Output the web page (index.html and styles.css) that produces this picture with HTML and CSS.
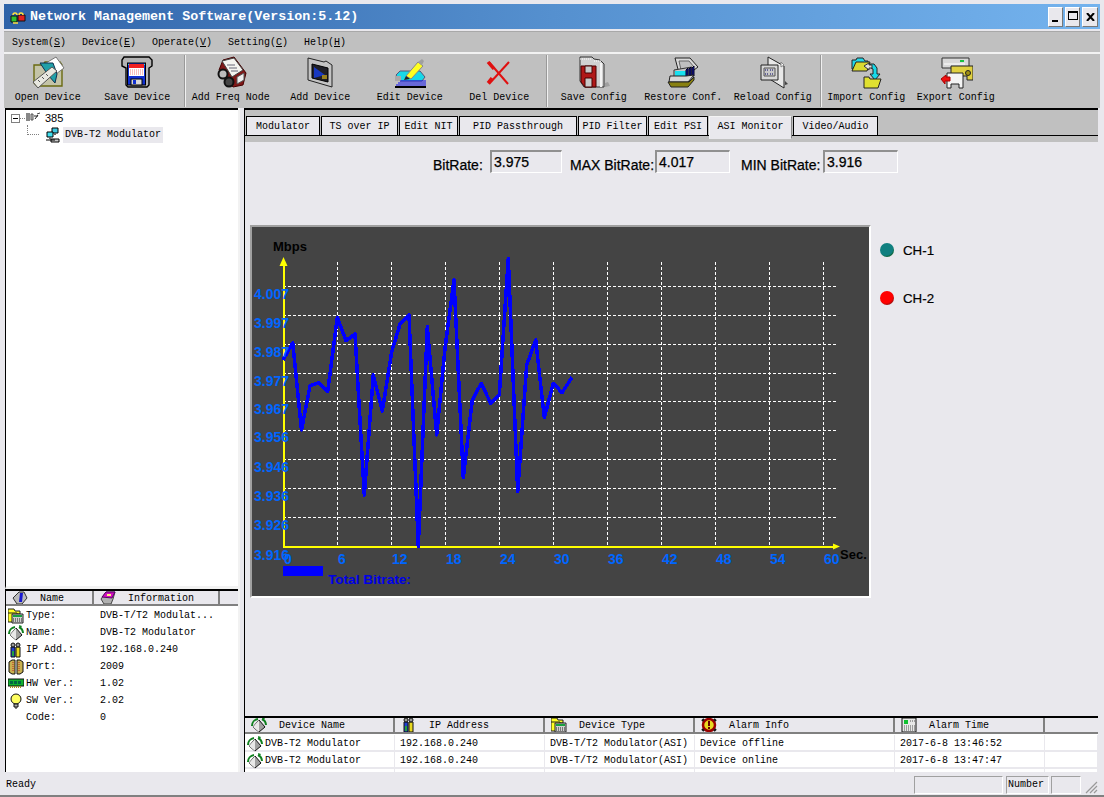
FILE: index.html
```html
<!DOCTYPE html>
<html lang="en">
<head>
<meta charset="utf-8">
<title>Network Management Software</title>
<link rel="stylesheet" href="styles.css">
</head>
<body>
<svg class="defs" xmlns="http://www.w3.org/2000/svg">
  <symbol id="i-open" viewBox="0 0 34 34">
    <path d="M3 10h9l2-3h15l2 3v21H6l-3-3z" fill="#c4c4a8" stroke="#6a6a10" stroke-width="1.4"/>
    <path d="M15 8l10-6 8 11-8 6z" fill="#fff" stroke="#777"/>
    <path d="M9 8h13l4 11-2 9-7-8z" fill="#20a0a8" stroke="#103050"/>
    <path d="M2 27L21 12l5 4L7 33z" fill="#e8e8e0" stroke="#555"/>
    <path d="M7 25l2 2M11 22l2 2M15 19l2 2" stroke="#555"/>
  </symbol>
  <symbol id="i-save" viewBox="0 0 34 34">
    <path d="M4 2h25l3 3v6l-3 2v17l-2 2H8l-2-2V13L2 11V5z" fill="#b4b4b4" stroke="#000" stroke-width="1.4"/>
    <rect x="7.500" y="8" width="18" height="22" fill="#1030d0" stroke="#000"/>
    <path d="M8 9h1v1H8zM24 9h1v1h-1z" fill="#20e0e0"/>
    <rect x="9" y="9" width="15" height="4" fill="#f02020"/>
    <rect x="9" y="13" width="15" height="8" fill="#fff"/>
    <path d="M10 15h13M10 17h13M10 19h13" stroke="#f08080" stroke-dasharray="1 1"/>
    <rect x="11" y="24" width="11" height="6" fill="#d8d8d8" stroke="#000"/>
    <rect x="13" y="25" width="3" height="4" fill="#1030d0"/>
  </symbol>
  <symbol id="i-freq" viewBox="0 0 34 34">
    <path d="M9 5L20 2l12 16-3 12-10 2L5 15z" fill="#801818" stroke="#400"/>
    <path d="M8 6l12-3 9 12-11 7z" fill="#f4f4f0" stroke="#444"/>
    <path d="M13 10h8M15 13h8M17 16h7" stroke="#667"/>
    <path d="M23 22l7-4v7l-7 4z" fill="#eee" stroke="#555"/>
    <circle cx="9" cy="19" r="4.500" fill="#bbb" stroke="#111" stroke-width="2"/>
    <circle cx="15" cy="27" r="4.500" fill="#444" stroke="#111" stroke-width="2"/>
  </symbol>
  <symbol id="i-dev" viewBox="0 0 34 34">
    <path d="M5 3l16 4 2-1 6 4v22L5 25z" fill="#c4c4c4" stroke="#222"/>
    <path d="M9 9l16 4v14L9 23z" fill="#202028" stroke="#000"/>
    <path d="M11 12l11 8-11 3z" fill="#1838c0"/>
    <path d="M19 20h5v4h-5z" fill="#988020"/>
  </symbol>
  <symbol id="i-edit" viewBox="0 0 34 34">
    <path d="M3 20L7 16h20l5 6-3 4H7z" fill="#18d8e8" stroke="#557"/>
    <path d="M2 21h6v5H2z" fill="#a8a8a8"/>
    <path d="M7 26h26M5 28h28M3 30h30" stroke="#1010f0"/>
    <path d="M2 32h31" stroke="#000" stroke-width="2"/>
    <path d="M13 21L25 7l5 4-12 13z" fill="#ffff20" stroke="#888"/>
    <path d="M25 7l4-3 2 2-2 4z" fill="#a0a0a0"/>
    <path d="M13 21l4 3-6 1z" fill="#222"/>
  </symbol>
  <symbol id="i-del" viewBox="0 0 34 34">
    <path d="M7 7l19 22" stroke="#e01010" stroke-width="2"/>
    <path d="M27 7L7 29" stroke="#e01010" stroke-width="2"/>
    <path d="M6 7l6 7M6 28l4-5" stroke="#e01010" stroke-width="3.400"/>
  </symbol>
  <symbol id="i-savec" viewBox="0 0 34 34">
    <path d="M3 2h12l2 2 6 1 4 4v23H7l-4-6z" fill="#d0d0d0" stroke="#333"/>
    <path d="M3 4h11M17 6h8" stroke="#fff" stroke-dasharray="1 1"/>
    <path d="M24 8v24" stroke="#f4f4f4" stroke-width="2"/>
    <path d="M4 11h15v21H8l-4-5z" fill="#b01818" stroke="#400"/>
    <path d="M8 11h7v7H8z" fill="#c8c8c8" stroke="#400"/>
    <path d="M8 23h7v9H8z" fill="#c8c8c8" stroke="#400"/>
    <path d="M28 32l5-1-2-4-3 1z" fill="#a0a0a0"/>
  </symbol>
  <symbol id="i-restore" viewBox="0 0 34 34">
    <path d="M9 3h15l8 9-8 6H13z" fill="#d8d8d8" stroke="#222"/>
    <path d="M13 6h10l5 6-5 3H15z" fill="#c0c0c0" stroke="#666"/>
    <path d="M8 15l18-3v10L8 25z" fill="#c8c8c8" stroke="#333"/>
    <path d="M9 16h12v6H9z" fill="#18e0f0"/>
    <path d="M20 15l2-2v10h-2zM23 14l2-2v10h-2zM26 13l2-2v10h-2z" fill="#1818a0" stroke="#002"/>
    <path d="M4 21h16l8-1-6 7H3z" fill="#d8d8d8" stroke="#222"/>
    <path d="M2 27h21l5-5v3l-6 7H5z" fill="#888010" stroke="#222"/>
  </symbol>
  <symbol id="i-reload" viewBox="0 0 34 34">
    <path d="M12 2l16 9v22L12 23z" fill="#e8e8e8" stroke="#222"/>
    <path d="M5 10h17v15H5z" fill="#d8d8d8" stroke="#222"/>
    <path d="M8 13h11v8H8z" fill="#c8c8c8" stroke="#555"/>
    <path d="M9 15h3M14 15h3M9 19h3M14 19h3" stroke="#006" stroke-dasharray="1 1"/>
    <path d="M28 10l-3-3v5z" fill="#fff" stroke="#888"/>
    <path d="M29 30l3-1-3-3z" fill="#444"/>
  </symbol>
  <symbol id="i-import" viewBox="0 0 34 34">
    <path d="M3 5h4l1-2h6l2 3h3v8H3z" fill="#20d8e8" stroke="#222"/>
    <path d="M3 16l4-9h14l-3 9z" fill="#d8d830" stroke="#222"/>
    <path d="M21 9h4l3 4v6h3l-5 6-5-6h3v-5l-2-1z" fill="#18d8e8" stroke="#222"/>
    <path d="M15 11l5-3v2h3v3h-3v2z" fill="#e0e0e0" stroke="#333"/>
    <path d="M15 22h5l1 2h11l-3 9H15z" fill="#e0e030" stroke="#222"/>
  </symbol>
  <symbol id="i-export" viewBox="0 0 34 34">
    <path d="M3 3h27v10H3z" fill="#d8d8d8" stroke="#333"/>
    <path d="M21 5h4v2h-4z" fill="#18c040"/>
    <path d="M5 9h21" stroke="#fff"/>
    <path d="M12 11h22v14h-6v-4H12z" fill="#e0d040" stroke="#222"/>
    <circle cx="29" cy="18" r="2.500" fill="#a09010" stroke="#222"/>
    <path d="M8 18h16v15H20v-4h-8v4H8z" fill="#f4f4f4" stroke="#222"/>
    <path d="M2 24l5-4v2h4v4h-5v3z" fill="#f01010" stroke="#a00"/>
  </symbol>
  <symbol id="s-net" viewBox="0 0 16 16">
    <path d="M7 1h6v5H7z" fill="#40c8e0" stroke="#000"/>
    <path d="M2 5h6v5H2z" fill="#40e0f0" stroke="#000"/>
    <path d="M4 10h2v2H4zM9 6h2v2H9z" fill="#666"/>
    <path d="M1 13h9M6 12h8v3H6z" fill="#ccc" stroke="#000"/>
  </symbol>
  <symbol id="s-root" viewBox="0 0 16 16">
    <path d="M2 3v8M4 3v8" stroke="#111"/>
    <path d="M6 4h2v6H6z" fill="#ccc" stroke="#555"/>
    <path d="M10 9l3-4M9 6h4" stroke="#222"/>
    <path d="M12 4l3-1" stroke="#444"/>
  </symbol>
  <symbol id="s-type" viewBox="0 0 16 16">
    <path d="M0 1h6l1 2h5v3H0z" fill="#ffff20" stroke="#222"/>
    <path d="M0 5h9v9H0z" fill="#ffff20" stroke="#222"/>
    <path d="M4 6h11v9H4z" fill="#d0d0d0" stroke="#222"/>
    <path d="M5 7h9v2H5z" fill="#18a040"/>
    <path d="M5 11h9M5 13h9" stroke="#222" stroke-dasharray="1 1"/>
  </symbol>
  <symbol id="s-name" viewBox="0 0 16 16">
    <path d="M8 3l6 7-6 5-6-5z" fill="#a0a0a0" stroke="#111"/>
    <path d="M8 3l-6 7 6 5z" fill="#e8e8e8"/>
    <path d="M1 9a7 7 0 0 1 6-7M15 8a7 7 0 0 0-4-6" fill="none" stroke="#108020" stroke-width="2"/>
    <path d="M11 0l3 1-2 3z" fill="#108020"/>
  </symbol>
  <symbol id="s-ip" viewBox="0 0 16 16">
    <path d="M3 5h4v10H3z" fill="#2040d0" stroke="#111"/>
    <path d="M8 5h4v10H8z" fill="#e8d820" stroke="#111"/>
    <path d="M4 9h2v5H4z" fill="#20a040"/>
    <circle cx="5" cy="3" r="2" fill="#999" stroke="#111"/>
    <circle cx="10" cy="3" r="2" fill="#999" stroke="#111"/>
  </symbol>
  <symbol id="s-port" viewBox="0 0 16 16">
    <path d="M1 3l3-2h3v14H4l-3-2z" fill="#c8b050" stroke="#111"/>
    <path d="M15 3l-3-2H9v14h3l3-2z" fill="#c8b050" stroke="#111"/>
    <path d="M5 3v10M11 3v10" stroke="#c02020" stroke-dasharray="1 1"/>
  </symbol>
  <symbol id="s-hw" viewBox="0 0 16 16">
    <path d="M0 3h16v7H0z" fill="#10b030" stroke="#111"/>
    <path d="M2 5h3v3H2zM6 5h3v3H6zM10 5h3v3h-3z" fill="#064"/>
    <path d="M2 11h12" stroke="#a09020" stroke-width="2" stroke-dasharray="1 1"/>
  </symbol>
  <symbol id="s-sw" viewBox="0 0 16 16">
    <circle cx="8" cy="6" r="5" fill="#ffff60" stroke="#111"/>
    <path d="M6 11h4v3H6z" fill="#aaa" stroke="#111"/>
    <path d="M7 15h2" stroke="#111"/>
  </symbol>
  <symbol id="s-info" viewBox="0 0 16 16">
    <path d="M1 8l6-6h5l3 6-5 6H5z" fill="#bbb" stroke="#333"/>
    <path d="M8 3h3l-1 9H7z" fill="#1818d0"/>
  </symbol>
  <symbol id="s-disc" viewBox="0 0 16 16">
    <path d="M1 9l5-7h9l-2 7-2 5H4z" fill="#b0b0b0" stroke="#444"/>
    <path d="M2 7l4-5h9l-3 6z" fill="#d010c0" stroke="#506"/>
    <path d="M7 4h4v2H7z" fill="#fff080"/>
  </symbol>
  <symbol id="s-alarm" viewBox="0 0 16 16">
    <circle cx="8" cy="8" r="6" fill="#e8d820" stroke="#900" stroke-width="2.500"/>
    <path d="M8 4v5M8 10v2" stroke="#600" stroke-width="2"/>
    <path d="M1 4l2-2M13 2l2 2M1 12l2 2M13 14l2-2" stroke="#111" stroke-width="2"/>
  </symbol>
  <symbol id="s-time" viewBox="0 0 16 16">
    <path d="M1 1h14v14H1z" fill="#e8e8e8" stroke="#111"/>
    <path d="M3 3h4v4H3z" fill="#10c030"/>
    <path d="M9 4h5M3 9h11M3 11h11M3 13h11" stroke="#555" stroke-dasharray="1 1"/>
  </symbol>
</svg>

<div class="window">
  <header class="titlebar">
    <svg class="app-icon" viewBox="0 0 16 16"><path d="M1 7h6v6H1z" fill="#30c030" stroke="#111"/><path d="M8 6h7v6H8z" fill="#e02020" stroke="#111"/><path d="M3 6a2 2 0 0 1 4 0M9 6a2 2 0 0 1 4 0M3 14h5" fill="none" stroke="#ffe040" stroke-width="1.500"/></svg>
    <span class="title-text">Network Management Software(Version:5.12)</span>
    <div class="win-buttons">
      <span class="win-btn"><span class="glyph-min"></span></span>
      <span class="win-btn"><span class="glyph-max"></span></span>
      <span class="win-btn"><svg class="glyph-close" viewBox="0 0 9 8"><path d="M1 0l7 8M8 0L1 8" stroke="#000" stroke-width="2"/></svg></span>
    </div>
  </header>

  <nav class="menubar">
    <span class="menu m-sys">System(<u>S</u>)</span>
    <span class="menu">Device(<u>E</u>)</span>
    <span class="menu">Operate(<u>V</u>)</span>
    <span class="menu">Setting(<u>C</u>)</span>
    <span class="menu">Help(<u>H</u>)</span>
  </nav>

  <div class="toolbar">
    <div class="tool"><svg class="tool-icon"><use href="#i-open"/></svg><span>Open Device</span></div>
    <div class="tool"><svg class="tool-icon"><use href="#i-save"/></svg><span>Save Device</span></div>
    <i class="sep"></i>
    <div class="tool"><svg class="tool-icon"><use href="#i-freq"/></svg><span>Add Freq Node</span></div>
    <div class="tool"><svg class="tool-icon"><use href="#i-dev"/></svg><span>Add Device</span></div>
    <div class="tool"><svg class="tool-icon"><use href="#i-edit"/></svg><span>Edit Device</span></div>
    <div class="tool"><svg class="tool-icon"><use href="#i-del"/></svg><span>Del Device</span></div>
    <i class="sep sep-wide"></i>
    <div class="tool"><svg class="tool-icon"><use href="#i-savec"/></svg><span>Save Config</span></div>
    <div class="tool"><svg class="tool-icon"><use href="#i-restore"/></svg><span>Restore Conf.</span></div>
    <div class="tool"><svg class="tool-icon"><use href="#i-reload"/></svg><span>Reload Config</span></div>
    <i class="sep"></i>
    <div class="tool"><svg class="tool-icon"><use href="#i-import"/></svg><span>Import Config</span></div>
    <div class="tool"><svg class="tool-icon"><use href="#i-export"/></svg><span>Export Config</span></div>
  </div>

  <main class="main">
    <aside class="left">
      <div class="tree">
        <div class="tree-root">
          <span class="expander"></span>
          <span class="dots-h"></span>
          <svg class="s16"><use href="#s-root"/></svg>
          <span class="root-label">385</span>
        </div>
        <div class="tree-child">
          <span class="dots-l"></span>
          <svg class="s16"><use href="#s-net"/></svg>
          <span class="selected">DVB-T2 Modulator</span>
        </div>
      </div>
      <div class="props">
        <div class="props-head">
          <div class="hcell"><svg class="s16 hicon"><use href="#s-info"/></svg><span>Name</span></div>
          <div class="hcell"><svg class="s16 hicon"><use href="#s-disc"/></svg><span>Information</span></div>
          <div class="hcell"></div>
        </div>
        <div class="prow"><div class="pname"><svg class="s16"><use href="#s-type"/></svg>Type:</div><div>DVB-T/T2 Modulat...</div></div>
        <div class="prow"><div class="pname"><svg class="s16"><use href="#s-name"/></svg>Name:</div><div>DVB-T2 Modulator</div></div>
        <div class="prow"><div class="pname"><svg class="s16"><use href="#s-ip"/></svg>IP Add.:</div><div>192.168.0.240</div></div>
        <div class="prow"><div class="pname"><svg class="s16"><use href="#s-port"/></svg>Port:</div><div>2009</div></div>
        <div class="prow"><div class="pname"><svg class="s16"><use href="#s-hw"/></svg>HW Ver.:</div><div>1.02</div></div>
        <div class="prow"><div class="pname"><svg class="s16"><use href="#s-sw"/></svg>SW Ver.:</div><div>2.02</div></div>
        <div class="prow"><div class="pname"><span class="s16"></span>Code:</div><div>0</div></div>
      </div>
    </aside>

    <section class="right">
      <div class="tabs">
        <div class="tab t1">Modulator</div>
        <div class="tab t2">TS over IP</div>
        <div class="tab t3">Edit NIT</div>
        <div class="tab t4">PID Passthrough</div>
        <div class="tab t5">PID Filter</div>
        <div class="tab t6">Edit PSI</div>
        <div class="tab t7 active">ASI Monitor</div>
        <div class="tab t8">Video/Audio</div>
      </div>
      <div class="content">
        <div class="rates">
          <label class="rlabel l1">BitRate:</label><output class="rbox b1">3.975</output>
          <label class="rlabel l2">MAX BitRate:</label><output class="rbox b2">4.017</output>
          <label class="rlabel l3">MIN BitRate:</label><output class="rbox b3">3.916</output>
        </div>
        <div class="chart-row">
          <div class="chart">
            <svg class="chart-svg" viewBox="252 227 617 369" xmlns="http://www.w3.org/2000/svg">
              <g class="grid">
                <path d="M337.500 262V546M391.500 262V546M445.500 262V546M499.500 262V546M553.500 262V546M607.500 262V546M661.500 262V546M715.500 262V546M769.500 262V546M823.500 262V546"/>
                <path d="M283 286.500H838M283 315.500H838M283 344.500H838M283 373.500H838M283 401.500H838M283 430.500H838M283 459.500H838M283 488.500H838M283 517.500H838"/>
              </g>
              <path class="axis" d="M283.500 262V546.500H835"/>
              <path class="arrow" d="M283.500 257l4 9h-8z"/>
              <path class="arrow" d="M840 546.500l-7 3v-6z"/>
              <polyline class="trace" points="283,360 292.7,343 301.5,430 310,386 318.3,382.7 327.7,391.7 337.3,317.3 346,340.7 355,334 364.3,495 373.3,375 382.3,411 391.7,351.7 400,324.3 409,315 418.3,546.7 427.3,326.7 436.7,435 445,348.3 454,280 463.3,477.7 472.3,400 481.3,383.3 490.7,403.3 499.3,395 508.3,258.3 517.7,491.7 526.7,365 535.7,340 544.3,417.7 553.3,383.3 562,392.7 572,377.3"/>
              <g class="ylab">
                <text x="254" y="299">4.007</text><text x="254" y="328">3.997</text><text x="254" y="357">3.987</text><text x="254" y="386">3.977</text><text x="254" y="414">3.967</text>
                <text x="254" y="442">3.956</text><text x="254" y="472">3.946</text><text x="254" y="501">3.936</text><text x="254" y="530">3.926</text><text x="254" y="560">3.916</text>
              </g>
              <g class="xlab">
                <text x="284" y="564">0</text><text x="338" y="564">6</text><text x="392" y="564">12</text><text x="446" y="564">18</text><text x="500" y="564">24</text><text x="554" y="564">30</text>
                <text x="608" y="564">36</text><text x="662" y="564">42</text><text x="716" y="564">48</text><text x="770" y="564">54</text><text x="824" y="564">60</text>
              </g>
              <text class="unit" x="273" y="251">Mbps</text>
              <text class="unit" x="840" y="559">Sec.</text>
              <rect class="swatch" x="283" y="566" width="40" height="10"/>
              <text class="total" x="328" y="584">Total Bitrate:</text>
            </svg>
          </div>
          <div class="legend">
            <div class="leg-item"><span class="dot teal"></span>CH-1</div>
            <div class="leg-item"><span class="dot red"></span>CH-2</div>
          </div>
        </div>
      </div>
      <div class="alarms">
        <div class="a-head">
          <div class="hcell"><svg class="s16 hicon"><use href="#s-name"/></svg><span>Device Name</span></div>
          <div class="hcell"><svg class="s16 hicon"><use href="#s-ip"/></svg><span>IP Address</span></div>
          <div class="hcell"><svg class="s16 hicon"><use href="#s-type"/></svg><span>Device Type</span></div>
          <div class="hcell"><svg class="s16 hicon"><use href="#s-alarm"/></svg><span>Alarm Info</span></div>
          <div class="hcell"><svg class="s16 hicon"><use href="#s-time"/></svg><span>Alarm Time</span></div>
          <div class="hcell"></div>
        </div>
        <div class="a-row">
          <div class="a-first"><svg class="s16"><use href="#s-name"/></svg>DVB-T2 Modulator</div><div>192.168.0.240</div><div>DVB-T/T2 Modulator(ASI)</div><div>Device offline</div><div>2017-6-8 13:46:52</div><div></div>
        </div>
        <div class="a-row">
          <div class="a-first"><svg class="s16"><use href="#s-name"/></svg>DVB-T2 Modulator</div><div>192.168.0.240</div><div>DVB-T/T2 Modulator(ASI)</div><div>Device online</div><div>2017-6-8 13:47:47</div><div></div>
        </div>
        <div class="a-row a-empty"><div></div><div></div><div></div><div></div><div></div><div></div></div>
      </div>
    </section>
  </main>

  <footer class="status">
    <span class="ready">Ready</span>
    <span class="pane p1"></span>
    <span class="pane p2">Number</span>
    <span class="pane p3"></span>
    <svg class="grip" viewBox="0 0 14 14"><path d="M13 2L2 13M13 6l-7 7M13 10l-3 3" stroke="#999" stroke-width="1.200"/></svg>
  </footer>
</div>
</body>
</html>
```
FILE: styles.css
```css
* { box-sizing: border-box; }
html, body { margin: 0; padding: 0; }
body {
  width: 1104px;
  height: 797px;
  overflow: hidden;
  background: #e9e8ed;
  font: 10px "Liberation Mono", "Noto Sans CJK SC", monospace;
  color: #000;
}
.defs { position: absolute; width: 0; height: 0; }
.s16 { display: inline-block; width: 16px; height: 16px; flex: none; }

.window {
  display: flex;
  flex-direction: column;
  height: 797px;
  padding: 4px 0 0 0;
  border-bottom: 2px solid #808080;
}

/* title bar */
.titlebar {
  display: flex;
  align-items: center;
  height: 25px;
  margin: 0 4px;
  padding: 0 2px 0 5px;
  background: linear-gradient(90deg, #2f62a8 0%, #5590cf 50%, #74b3ee 100%);
}
.app-icon { width: 18px; height: 16px; margin-right: 3px; }
.title-text {
  color: #fff;
  font: bold 13.35px "Liberation Mono", monospace;
}
.win-buttons { margin-left: auto; display: flex; gap: 2px; }
.win-btn {
  display: flex;
  align-items: center;
  justify-content: center;
  width: 15px;
  height: 20px;
  background: #e9e8ed;
  border: 1px solid;
  border-color: #fff #777 #777 #fff;
}
.win-btn:last-child { width: 16px; }
.glyph-min { width: 6px; height: 2px; background: #000; margin-top: 8px; margin-right: 1px; }
.glyph-max { width: 10px; height: 9px; border: 1px solid #000; border-top-width: 2px; margin-bottom: 2px; }
.glyph-close { width: 9px; height: 8px; }

/* menu */
.menubar {
  display: flex;
  align-items: center;
  height: 21px;
  margin: 2px 4px 0;
  padding-left: 8px;
  background: #c0c0c0;
  border-top: 1px solid #a8a8a8;
}
.menu { width: 70px; }
.menu:nth-child(3) { width: 76px; }
.menu:nth-child(4) { width: 76px; }
.menu u { text-decoration: underline; }

/* toolbar */
.toolbar {
  display: flex;
  height: 56px;
  margin: 0 4px;
  background: #c0c0c0;
  border-top: 2px solid #f2f2f2;
}
.tool {
  display: flex;
  flex-direction: column;
  align-items: center;
  width: 89.5px;
  height: 54px;
  padding-top: 1px;
  white-space: nowrap;
}
.tool-icon { width: 34px; height: 34px; margin-bottom: 3px; flex: none; }
.sep {
  width: 2px;
  height: 52px;
  margin: 1px 0 0 2px;
  background: #f0f0f0;
  border-left: 1px solid #999;
  flex: none;
}
.sep-wide { margin-right: 1px; }
.tool:first-child { margin-left: -1px; }

/* main */
.main {
  flex: 1;
  display: flex;
  min-height: 0;
  margin: 0 6px 0 5px;
}
.left {
  width: 235px;
  display: flex;
  flex-direction: column;
  border-right: 2px solid #f2f2f2;
}
.tree {
  flex: 1;
  background: #fff;
  border-left: 1px solid #000;
  border-top: 2px solid #000;
  border-bottom: 3px solid #f2f2f2;
  padding: 1px 0 0 5px;
}
.tree-root { display: flex; align-items: center; height: 14px; }
.expander {
  position: relative;
  width: 9px;
  height: 9px;
  border: 1px solid #808080;
  background: #fff;
}
.expander::after {
  content: "";
  position: absolute;
  left: 1px;
  top: 3px;
  width: 5px;
  height: 1px;
  background: #000;
}
.dots-h { width: 5px; border-top: 1px dotted #808080; }
.root-label { font: 11px "Liberation Sans", sans-serif; margin-left: 4px; }
.tree-child { display: flex; align-items: center; height: 17px; margin-top: 1px; padding-left: 34px; }
.dots-l {
  width: 12px;
  height: 10px;
  margin: -10px 6px 0 -18px;
  border-left: 1px dotted #808080;
  border-bottom: 1px dotted #808080;
}
.selected { background: #e9e8ed; line-height: 16px; padding: 0 2px; margin-left: 2px; }

.props {
  height: 183px;
  border-top: 2px solid #000;
  border-left: 1px solid #000;
  background: #fff;
}
.props-head {
  display: grid;
  grid-template-columns: 88px 126px 1fr;
  height: 15px;
  background: #e9e8ed;
  line-height: 15px;
}
.props-head .hcell span { padding-top: 1px; }
.hcell {
  display: flex;
  align-items: center;
  border-right: 2px solid #808080;
  border-bottom: 2px solid #808080;
  padding-left: 6px;
  overflow: hidden;
  white-space: nowrap;
}
.hcell:last-child { border-right: 0; }
.hicon { margin-right: 12px; }
.prow {
  display: grid;
  grid-template-columns: 94px 1fr;
  height: 17px;
  align-items: center;
  white-space: nowrap;
}
.props-head + .prow { margin-top: 1px; }
.pname { display: flex; align-items: center; padding-left: 2px; }
.pname .s16 { margin-right: 2px; }

/* right */
.right {
  flex: 1;
  display: flex;
  flex-direction: column;
  min-width: 0;
  margin-left: 4px;
  border-left: 1px solid #000;
}
.tabs {
  display: flex;
  height: 34px;
  padding: 6px 0 0 1px;
  background: #c0c0c0;
  border-top: 2px solid #000;
  position: relative;
}
.tabs::after {
  content: "";
  position: absolute;
  left: 0;
  right: 0;
  top: 25px;
  height: 1px;
  background: #000;
}
.tab {
  height: 20px;
  line-height: 20px;
  text-align: center;
  background: #e9e8ed;
  border: 1px solid #000;
  position: relative;
  z-index: 1;
  margin-right: 1px;
  white-space: nowrap;
}
.t1 { width: 74px; }
.t2 { width: 77px; }
.t3 { width: 59px; }
.t4 { width: 118px; }
.t5 { width: 69px; }
.t6 { width: 60px; }
.t7 { width: 83px; }
.t8 { width: 85px; }
.tab.active { height: 23px; border-color: #f4f4f4 #888 #e9e8ed #f4f4f4; }

.content {
  height: 570px;
  background: #e9e8ed;
  padding-top: 8px;
}
.rates {
  display: flex;
  height: 23px;
  padding-left: 188px;
  font: 14px "Liberation Sans", sans-serif;
  -webkit-text-stroke: 0.25px #000;
}
.rlabel { padding-top: 7px; white-space: nowrap; }
.rbox {
  height: 23px;
  padding: 2px 0 0 2px;
  font: 14px "Liberation Sans", sans-serif;
  border: 1px solid;
  border-color: #909090 #fff #fff #909090;
  border-top-width: 2px;
  border-left-width: 2px;
}
.l1 { width: 57px; }
.b1 { width: 72px; margin-right: 8px; }
.l2 { width: 85px; }
.b2 { width: 75px; margin-right: 11px; }
.l3 { width: 82px; }
.b3 { width: 75px; }

.chart-row { display: flex; margin-top: 52px; padding-left: 5px; }
.chart {
  width: 621px;
  height: 373px;
  border: 2px solid;
  border-color: #a0a0a0 #fff #fff #a0a0a0;
  flex: none;
}
.chart-svg { display: block; width: 617px; height: 369px; background: #444; }
.grid path { fill: none; stroke: #fff; stroke-width: 1; stroke-dasharray: 3 2; shape-rendering: crispEdges; }
.axis { fill: none; stroke: #ffff00; stroke-width: 2; shape-rendering: crispEdges; }
.arrow { fill: #ffff00; }
.trace { fill: none; stroke: #0000ff; stroke-width: 3.500; shape-rendering: crispEdges; stroke-linejoin: round; }
.ylab text, .xlab text { font: bold 14px "Liberation Sans", sans-serif; fill: #0066ff; }
.unit { font: bold 13px "Liberation Sans", sans-serif; fill: #000; }
.swatch { fill: #0000ff; }
.total { font: bold 13.6px "Liberation Sans", sans-serif; fill: #0000e8; }

.legend {
  display: flex;
  flex-direction: column;
  gap: 32px;
  margin-left: 8px;
  padding-top: 17px;
  font: 13.3px "Liberation Sans", sans-serif;
  -webkit-text-stroke: 0.2px #000;
}
.leg-item { display: flex; align-items: center; height: 16px; }
.dot {
  width: 14px;
  height: 14px;
  border-radius: 50%;
  margin-right: 9px;
  margin-left: 1px;
}
.teal { background: radial-gradient(circle at 42% 38%, #108080 58%, #0a5a20 78%, #000 100%); }
.red { background: radial-gradient(circle at 42% 38%, #ff0000 55%, #901010 78%, #300 100%); }

.alarms {
  flex: 1;
  min-height: 0;
  overflow: hidden;
  margin-top: 4px;
  background: #fff;
  border-top: 2px solid #000;
}
.a-head, .a-row {
  display: grid;
  grid-template-columns: 150px 150px 150px 200px 150px 1fr;
}
.a-head { height: 16px; background: #e9e8ed; }
.a-head .hicon { margin-right: 12px; }
.a-row { height: 17px; align-items: stretch; white-space: nowrap; border-bottom: 2px solid #e9e8ed; }
.a-head + .a-row { margin-top: 1px; }
.a-row > div { border-right: 1px solid #e9e8ed; padding-left: 5px; line-height: 17px; }
.a-row > .a-first { display: flex; align-items: center; padding-left: 2px; }
.a-first .s16 { margin-right: 2px; }
.a-empty { height: 5px; }

/* status */
.status {
  display: flex;
  align-items: center;
  height: 23px;
  margin: 0 0 0 5px;
  padding: 2px 6px 0 0;
  background: #e9e8ed;
}
.ready { margin-right: auto; padding-left: 1px; }
.pane {
  height: 18px;
  line-height: 16px;
  border: 1px solid;
  border-color: #a0a0a0 #fff #fff #a0a0a0;
  padding-left: 1px;
}
.p1 { width: 89px; margin-right: 3px; }
.p2 { width: 43px; margin-right: 2px; }
.p3 { width: 30px; }
.grip { width: 14px; height: 14px; margin: 4px 0 0 3px; }
```
